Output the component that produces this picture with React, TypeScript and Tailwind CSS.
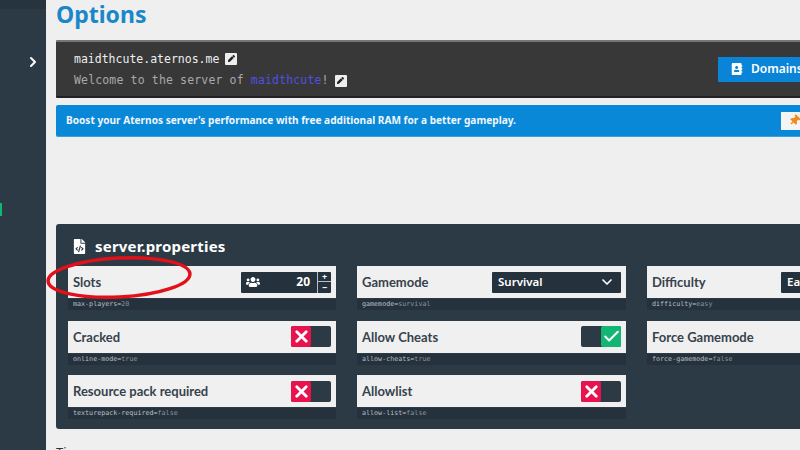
import { ChevronRight, ChevronDown, Check, X } from "lucide-react";
import { FaUsers, FaFileCode, FaAddressBook, FaPen, FaThumbtack } from "react-icons/fa";

function Card({ label, k, v, children }: { label: string; k: string; v: string; children: React.ReactNode }) {
  return (
    <div className="flex flex-col">
      <div className="h-[32px] bg-[#f0f0f0] flex items-center justify-between pl-[5px] pr-[5px] overflow-hidden">
        <span className="pt-[2px] text-[13px] font-bold text-[#36424c] font-['Lato',sans-serif] whitespace-nowrap">{label}</span>
        {children}
      </div>
      <div className="mt-[1px] h-[11px] bg-[#25323d] pl-[5px] flex items-center font-['DejaVu_Sans_Mono',monospace] text-[6.7px] leading-none whitespace-nowrap">
        <span className="text-[#b8bec3]">{k}=</span>
        <span className="text-[#8a949c]">{v}</span>
      </div>
    </div>
  );
}

function Toggle({ on }: { on: boolean }) {
  return (
    <div className={`w-[40px] h-[21px] bg-[#2c3a45] rounded-[2px] flex ${on ? "justify-end" : "justify-start"}`}>
      <div className={`w-[20px] h-[21px] rounded-[2px] flex items-center justify-center ${on ? "bg-[#12b573]" : "bg-[#e8124f]"}`}>
        {on ? <Check size={19} strokeWidth={2.5} className="text-white" /> : <X size={19} strokeWidth={3.5} className="text-white" />}
      </div>
    </div>
  );
}

function Edit({ className }: { className: string }) {
  return (
    <span className={`w-[12px] h-[12px] bg-[#eee] rounded-[1px] flex items-center justify-center ${className}`}>
      <FaPen size={7} className="text-[#222]" />
    </span>
  );
}

export default function App() {
  return (
    <div className="relative w-[800px] h-[450px] overflow-hidden flex bg-[#efefef] font-['Noto_Sans',sans-serif]">
      <aside className="relative w-[46px] shrink-0 bg-[#2c3a45] flex flex-col">
        <div className="h-[9px] bg-[#27333d]" />
        <div className="mt-[45px] flex justify-end pr-[5px]">
          <ChevronRight size={16} strokeWidth={3} className="text-white" />
        </div>
        <div className="absolute left-0 top-[203px] w-[2px] h-[13px] bg-[#12b573]" />
      </aside>
      <main className="pl-[10px] w-[754px] shrink-0 flex flex-col">
        <h1 className="h-[40px] shrink-0 text-[23px] leading-[28px] font-bold text-[#1a87c9]">Options</h1>
        <section className="shrink-0 w-[800px] h-[58px] bg-[#383838] border-t-2 border-t-[#777] border-b-2 border-b-[#222] flex justify-between items-center pl-[18px] rounded-[1px]">
          <div className="flex flex-col gap-[7px] font-['DejaVu_Sans_Mono',monospace] text-[11.5px] leading-[14px]">
            <div className="flex items-center gap-[6px] text-[#eee]">
              maidthcute.aternos.me
              <Edit className="" />
            </div>
            <div className="flex items-center gap-[6px] text-[#a9a9a9] tracking-[0.15px]">
              <span>Welcome to the server of <span className="text-[#5050e0]">maidthcute</span>!</span>
              <Edit className="mt-[2px]" />
            </div>
          </div>
          <div className="w-[138px] h-[25px] bg-[#0a84d6] flex items-center pl-[13px] gap-[8px] text-white text-[12px] font-semibold">
            <FaAddressBook size={12} />
            Domains
          </div>
        </section>
        <section className="shrink-0 mt-[7px] w-[800px] h-[32px] bg-[#0a88d8] rounded-[2px] flex items-center justify-between pl-[10px] border-b border-b-[#3aa0e0]">
          <span className="text-[10.1px] font-bold text-[#eef6fc]">Boost your Aternos server's performance with free additional RAM for a better gameplay.</span>
          <span className="mr-[31px] w-[44px] h-[18px] bg-[#f4f4f4] flex items-center pl-[8px]">
            <FaThumbtack size={11} className="text-[#f08a1d] rotate-45" />
          </span>
        </section>
        <section className="shrink-0 mt-[87px] w-[800px] h-[205px] bg-[#2c3a45] rounded-[3px] pl-[12px] pt-[7px] pr-[12px]">
          <div className="h-[30px] mb-[5px] flex items-center gap-[8px] pl-[4px] text-white text-[15px] font-bold tracking-[0.2px]">
            <FaFileCode size={15} />
            server.properties
          </div>
          <div className="grid grid-cols-[268px_269px_268px] gap-x-[21px] gap-y-[10.5px]">
            <Card label="Slots" k="max-players" v="20">
              <div className="w-[90px] h-[21px] bg-[#25323d] rounded-[1px] flex items-center text-white text-[12px] font-bold">
                <FaUsers size={14} className="ml-[5px]" />
                <span className="ml-auto mr-[7px]">20</span>
                <div className="w-[14px] h-[21px] flex flex-col border-l border-l-[#b8bec3] text-[9px] leading-none">
                  <span className="h-[10px] flex items-center justify-center border-b border-b-[#b8bec3]">+</span>
                  <span className="h-[11px] flex items-center justify-center">−</span>
                </div>
              </div>
            </Card>
            <Card label="Gamemode" k="gamemode" v="survival">
              <div className="w-[129px] h-[21px] bg-[#25323d] rounded-[1px] flex items-center justify-between px-[6px] text-white text-[11.5px] font-semibold">
                Survival
                <ChevronDown size={16} strokeWidth={2.5} />
              </div>
            </Card>
            <Card label="Difficulty" k="difficulty" v="easy">
              <div className="w-[129px] h-[21px] bg-[#25323d] rounded-[1px] flex items-center justify-between px-[6px] text-white text-[11.5px] font-semibold">
                Easy
                <ChevronDown size={16} strokeWidth={2.5} />
              </div>
            </Card>
            <Card label="Cracked" k="online-mode" v="true"><Toggle on={false} /></Card>
            <Card label="Allow Cheats" k="allow-cheats" v="true"><Toggle on /></Card>
            <Card label="Force Gamemode" k="force-gamemode" v="false"><Toggle on={false} /></Card>
            <Card label="Resource pack required" k="texturepack-required" v="false"><Toggle on={false} /></Card>
            <Card label="Allowlist" k="allow-list" v="false"><Toggle on={false} /></Card>
          </div>
        </section>
        <div className="shrink-0 mt-[15px] text-[13px] leading-[16px] text-[#333]">Tip</div>
      </main>
      <svg className="absolute left-[44px] top-[254px] pointer-events-none" width="152" height="48" viewBox="0 0 152 48" fill="none">
        <ellipse cx="75" cy="23.5" rx="71" ry="19.5" transform="rotate(-3 75 23.5)" stroke="#e2101a" strokeWidth="3.5" />
      </svg>
    </div>
  );
}
